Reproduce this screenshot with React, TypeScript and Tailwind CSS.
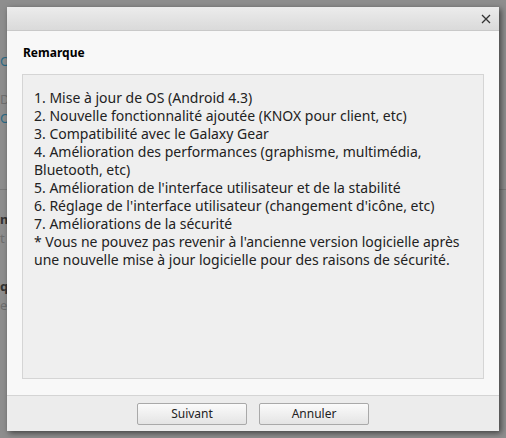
import React from 'react'

const lines = [
  '1. Mise à jour de OS (Android 4.3)',
  '2. Nouvelle fonctionnalité ajoutée (KNOX pour client, etc)',
  '3. Compatibilité avec le Galaxy Gear',
  '4. Amélioration des performances (graphisme, multimédia, Bluetooth, etc)',
  "5. Amélioration de l'interface utilisateur et de la stabilité",
  "6. Réglage de l'interface utilisateur (changement d'icône, etc)",
  '7. Améliorations de la sécurité',
  "* Vous ne pouvez pas revenir à l'ancienne version logicielle après une nouvelle mise à jour logicielle pour des raisons de sécurité.",
]

function DialogButton({ label }: { label: string }) {
  return (
    <button className="h-[22px] w-[110px] rounded-[2px] border border-[#a9a9a9] bg-gradient-to-b from-[#fbfbfb] to-[#e4e4e4] text-[12px] text-[#222]">
      {label}
    </button>
  )
}

export default function App() {
  return (
    <div
      className="relative h-[438px] w-[506px] overflow-hidden bg-[#8e8e8e]"
      style={{ fontFamily: 'Tahoma, "Noto Sans", "DejaVu Sans", sans-serif' }}
    >
      {/* dimmed page behind the dialog */}
      <div className="flex h-full flex-col text-[13px] text-[#6f6f6f]">
        <div className="h-[52px]" />
        <div className="text-[#2a6a86]">O</div>
        <div className="mt-[18px]">D/</div>
        <div className="text-[#2a6a86]">O</div>
        <div className="mt-[60px] border-t border-[#7b7b7b]" />
        <div className="mt-[20px] font-bold text-[#333]">m</div>
        <div>t</div>
        <div className="mt-[28px] font-bold text-[#333]">q</div>
        <div>e</div>
      </div>

      {/* dialog */}
      <div className="absolute left-[7px] top-[7px] flex h-[424px] w-[492px] flex-col bg-[#f8f8f8] shadow-[2px_2px_6px_rgba(0,0,0,0.55)]">
        <div className="flex h-[24px] items-center justify-end border-b border-[#c9c9c9] bg-gradient-to-b from-[#ececec] to-[#dadada] pr-[8px]">
          <svg width="10" height="10" viewBox="0 0 10 10">
            <path d="M1 1L9 9M9 1L1 9" stroke="#333" strokeWidth="1.3" />
          </svg>
        </div>

        <div className="flex flex-1 flex-col px-[15px]">
          <div className="pl-[1px] pt-[14px] text-[12px] font-bold leading-[16px] text-black">Remarque</div>
          <div className="mb-[16px] mt-[13px] flex-1 border border-[#d5d5d5] bg-[#efefef] px-[11px] pt-[14px] text-[14px] leading-[18px] text-[#222]">
            {lines.map((l) => (
              <div key={l}>{l}</div>
            ))}
          </div>
        </div>

        <div className="flex h-[36px] items-center justify-center gap-[12px] border-t border-[#d4d4d4] bg-[#ececec]">
          <DialogButton label="Suivant" />
          <DialogButton label="Annuler" />
        </div>
      </div>
    </div>
  )
}
